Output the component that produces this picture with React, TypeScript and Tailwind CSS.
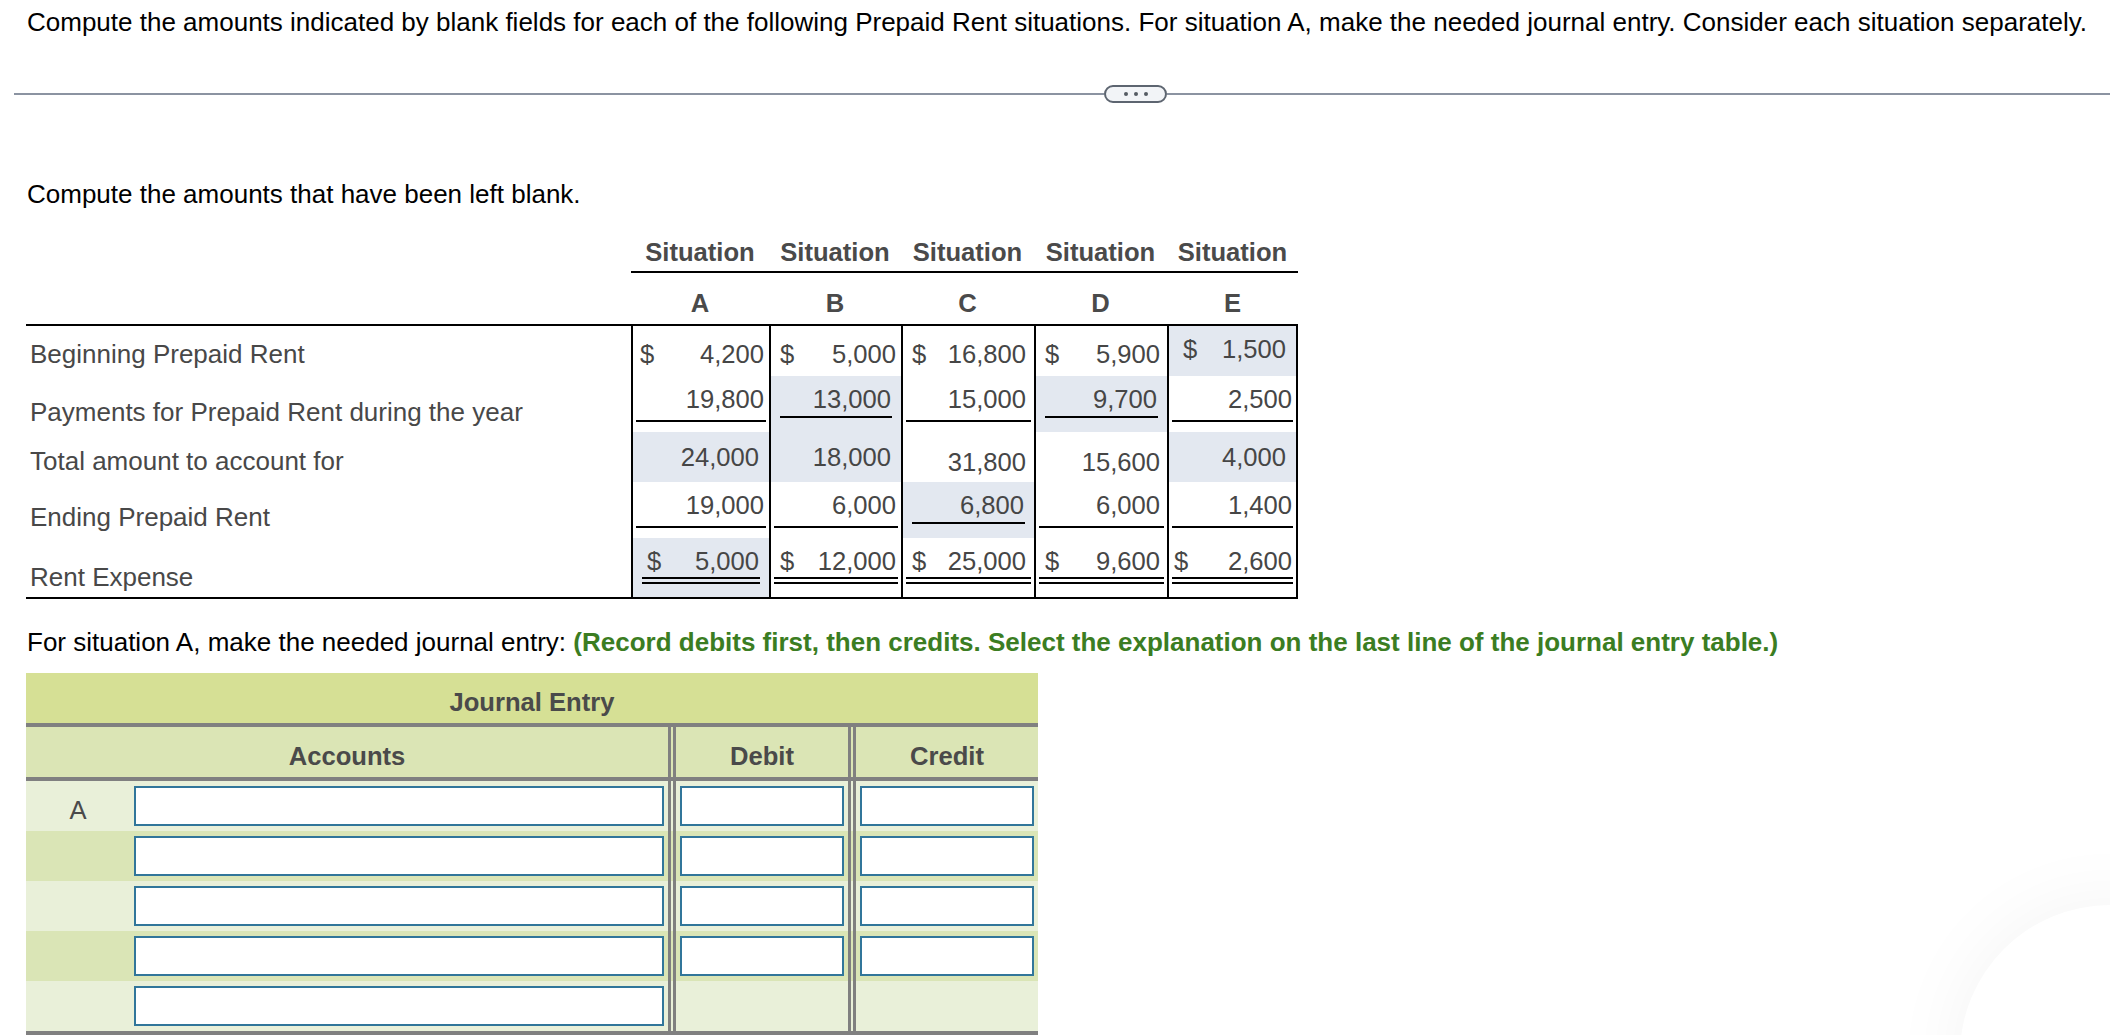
import React from 'react';

type Cell = { v: string; d?: boolean; s?: boolean; u?: 0 | 1 | 2 };

type Row = {
  label: string;
  h: string;
  lpt: string;
  pt: string;
  spt: string;
  cells: Cell[];
};

const colW = ['w-[138px]', 'w-[132px]', 'w-[133px]', 'w-[133px]', 'w-[131px]'];
const plainPl = ['pl-[4px]', 'pl-[6px]', 'pl-[6px]', 'pl-[6px]', 'pl-[2px]'];
const plainPr = ['pr-[2px]', 'pr-[2px]', 'pr-[5px]', 'pr-[4px]', 'pr-[1px]'];

const rows: Row[] = [
  {
    label: 'Beginning Prepaid Rent',
    h: 'h-[50px]',
    lpt: 'pt-[14px]',
    pt: 'pt-[14px]',
    spt: 'pt-[9px]',
    cells: [
      { v: '4,200', d: true },
      { v: '5,000', d: true },
      { v: '16,800', d: true },
      { v: '5,900', d: true },
      { v: '1,500', d: true, s: true },
    ],
  },
  {
    label: 'Payments for Prepaid Rent during the year',
    h: 'h-[56px]',
    lpt: 'pt-[22px]',
    pt: 'pt-[9px]',
    spt: 'pt-[9px]',
    cells: [
      { v: '19,800', u: 1 },
      { v: '13,000', s: true, u: 1 },
      { v: '15,000', u: 1 },
      { v: '9,700', s: true, u: 1 },
      { v: '2,500', u: 1 },
    ],
  },
  {
    label: 'Total amount to account for',
    h: 'h-[50px]',
    lpt: 'pt-[15px]',
    pt: 'pt-[16px]',
    spt: 'pt-[11px]',
    cells: [
      { v: '24,000', s: true },
      { v: '18,000', s: true },
      { v: '31,800' },
      { v: '15,600' },
      { v: '4,000', s: true },
    ],
  },
  {
    label: 'Ending Prepaid Rent',
    h: 'h-[56px]',
    lpt: 'pt-[21px]',
    pt: 'pt-[9px]',
    spt: 'pt-[9px]',
    cells: [
      { v: '19,000', u: 1 },
      { v: '6,000', u: 1 },
      { v: '6,800', s: true, u: 1 },
      { v: '6,000', u: 1 },
      { v: '1,400', u: 1 },
    ],
  },
  {
    label: 'Rent Expense',
    h: 'h-[61px]',
    lpt: 'pt-[25px]',
    pt: 'pt-[9px]',
    spt: 'pt-[9px]',
    cells: [
      { v: '5,000', d: true, s: true, u: 2 },
      { v: '12,000', d: true, u: 2 },
      { v: '25,000', d: true, u: 2 },
      { v: '9,600', d: true, u: 2 },
      { v: '2,600', d: true, u: 2 },
    ],
  },
];

function ValueCell({ c, i, row }: { c: Cell; i: number; row: Row }) {
  const line =
    c.u === 1
      ? c.s
        ? 'pb-[2px] border-b-2 border-black'
        : 'pb-[6px] border-b-2 border-black'
      : c.u === 2
        ? 'pb-[1px] border-b-[7px] border-double border-black'
        : '';
  return (
    <div
      className={`${colW[i]} border-l-2 border-black ${i === 4 ? 'border-r-2' : ''} ${
        c.s ? 'bg-[#e3e8f0]' : ''
      }`}
    >
      <div
        className={`flex justify-between ${c.s ? `mx-[9px] pl-[5px] pr-[1px] ${row.spt}` : `mx-[3px] ${plainPl[i]} ${plainPr[i]} ${row.pt}`} ${line}`}
      >
        <span>{c.d ? '$' : ''}</span>
        <span>{c.v}</span>
      </div>
    </div>
  );
}

function JournalRow({ idx }: { idx: number }) {
  const bg = idx % 2 === 0 ? 'bg-[#e9f0d9]' : 'bg-[#dae5b6]';
  const input = 'h-[40px] border-2 border-[#31769a] bg-white';
  const last = idx === 4;
  return (
    <div className={`flex h-[50px] ${bg}`}>
      <div className="w-[642px] flex items-center">
        <div className="w-[108px] h-full flex items-center justify-center pt-[8px] pr-[4px]">
          {idx === 0 ? 'A' : ''}
        </div>
        <div className={`w-[530px] ${input}`} />
      </div>
      <div className="w-[180px] h-full border-l-[8px] border-double border-[#808080] flex items-center pl-[4px]">
        {!last && <div className={`w-[164px] ${input}`} />}
      </div>
      <div className="flex-1 h-full border-l-[8px] border-double border-[#808080] flex items-center pl-[4px]">
        {!last && <div className={`w-[174px] ${input}`} />}
      </div>
    </div>
  );
}

export default function App() {
  return (
    <div className="relative w-[2110px] h-[1035px] overflow-hidden bg-white font-['Liberation_Sans',Arial,sans-serif] text-[25.6px] leading-[29px] text-black">
      <p className="pt-[8px] pl-[27px] whitespace-nowrap text-[26px]">
        Compute the amounts indicated by blank fields for each of the following Prepaid Rent situations. For
        situation A, make the needed journal entry. Consider each situation separately.
      </p>

      {/* divider with collapse handle */}
      <div className="mt-[48px] ml-[14px] flex items-center h-[18px]">
        <div className="w-[1090px] h-[2px] bg-[#8b93a1]" />
        <div className="w-[63px] h-[18px] rounded-full border-2 border-[#5d6570] bg-[#f2f4f7] flex items-center justify-center gap-[6px]">
          <span className="w-[4px] h-[4px] rounded-full bg-[#555b63]" />
          <span className="w-[4px] h-[4px] rounded-full bg-[#555b63]" />
          <span className="w-[4px] h-[4px] rounded-full bg-[#555b63]" />
        </div>
        <div className="flex-1 h-[2px] bg-[#8b93a1]" />
      </div>

      <p className="mt-[77px] pl-[27px] text-[26px]">Compute the amounts that have been left blank.</p>

      {/* situations table */}
      <div className="mt-[22px] ml-[26px] w-[1272px] text-[#464646]">
        <div className="flex h-[42px]">
          <div className="w-[605px]" />
          {['A', 'B', 'C', 'D', 'E'].map((k, i) => (
            <div
              key={k}
              className={`${colW[i]} flex items-end justify-center pb-[4px] border-b-2 border-black font-bold text-[#4a4a4a]`}
            >
              Situation
            </div>
          ))}
        </div>
        <div className="flex h-[53px] border-b-2 border-black">
          <div className="w-[605px]" />
          {['A', 'B', 'C', 'D', 'E'].map((k, i) => (
            <div key={k} className={`${colW[i]} flex justify-center pt-[16px] font-bold text-[#4a4a4a]`}>
              {k}
            </div>
          ))}
        </div>
        {rows.map((r, ri) => (
          <div key={r.label} className={`flex ${r.h} ${ri === rows.length - 1 ? 'border-b-2 border-black' : ''}`}>
            <div className={`w-[605px] pl-[4px] ${r.lpt} text-[26px] text-[#484848]`}>{r.label}</div>
            {r.cells.map((c, i) => (
              <ValueCell key={i} c={c} i={i} row={r} />
            ))}
          </div>
        ))}
      </div>

      <p className="mt-[29px] pl-[27px] whitespace-nowrap text-[26px]">
        For situation A, make the needed journal entry:{' '}
        <span className="font-bold text-[#3b7d22]">
          (Record debits first, then credits. Select the explanation on the last line of the journal entry table.)
        </span>
      </p>

      {/* journal entry table */}
      <div className="mt-[16px] ml-[26px] w-[1012px] text-[#4a4a4a]">
        <div className="h-[50px] bg-[#d6e095] flex items-center justify-center pt-[8px] font-bold">Journal Entry</div>
        <div className="h-[4px] bg-[#808080]" />
        <div className="flex h-[50px] bg-[#dbe5b5] font-bold">
          <div className="w-[642px] flex items-center justify-center pt-[8px]">Accounts</div>
          <div className="w-[180px] border-l-[8px] border-double border-[#808080] flex items-center justify-center pt-[8px]">
            Debit
          </div>
          <div className="flex-1 border-l-[8px] border-double border-[#808080] flex items-center justify-center pt-[8px]">
            Credit
          </div>
        </div>
        <div className="h-[4px] bg-[#808080]" />
        {[0, 1, 2, 3, 4].map((i) => (
          <JournalRow key={i} idx={i} />
        ))}
        <div className="h-[4px] bg-[#808080]" />
      </div>

      {/* faint shadow of a floating control at bottom right */}
      <div className="absolute right-[-150px] bottom-[-170px] w-[300px] h-[300px] rounded-full bg-white shadow-[0_0_80px_rgba(0,0,0,0.05)]" />
    </div>
  );
}
